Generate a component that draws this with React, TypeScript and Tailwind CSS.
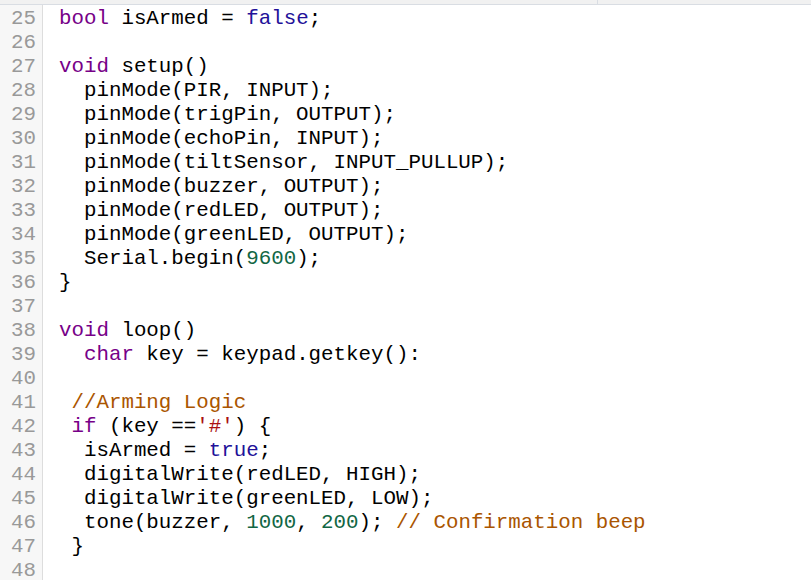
import React from "react";

type Tok = [string, string];
const K = "text-[#770088]";
const A = "text-[#221199]";
const N = "text-[#116644]";
const C = "text-[#aa5500]";
const S = "text-[#aa1111]";
const P = "text-[#000000]";

const lines: Tok[][] = [
  [[K, "bool"], [P, " isArmed = "], [A, "false"], [P, ";"]],
  [],
  [[K, "void"], [P, " setup()"]],
  [[P, "  pinMode(PIR, INPUT);"]],
  [[P, "  pinMode(trigPin, OUTPUT);"]],
  [[P, "  pinMode(echoPin, INPUT);"]],
  [[P, "  pinMode(tiltSensor, INPUT_PULLUP);"]],
  [[P, "  pinMode(buzzer, OUTPUT);"]],
  [[P, "  pinMode(redLED, OUTPUT);"]],
  [[P, "  pinMode(greenLED, OUTPUT);"]],
  [[P, "  Serial.begin("], [N, "9600"], [P, ");"]],
  [[P, "}"]],
  [],
  [[K, "void"], [P, " loop()"]],
  [[P, "  "], [K, "char"], [P, " key = keypad.getkey():"]],
  [],
  [[P, " "], [C, "//Arming Logic"]],
  [[P, " "], [K, "if"], [P, " (key =="], [S, "'#'"], [P, ") {"]],
  [[P, "  isArmed = "], [A, "true"], [P, ";"]],
  [[P, "  digitalWrite(redLED, HIGH);"]],
  [[P, "  digitalWrite(greenLED, LOW);"]],
  [[P, "  tone(buzzer, "], [N, "1000"], [P, ", "], [N, "200"], [P, "); "], [C, "// Confirmation beep"]],
  [[P, " }"]],
  [],
];

export default function App() {
  return (
    <div className="w-[811px] h-[580px] overflow-hidden bg-white flex flex-col" style={{ fontFamily: '"Liberation Mono", "Courier New", monospace' }}>
      <div className="h-[5px] shrink-0 flex bg-[#f1f1f1] border-b border-[#d9dde3]">
        <div className="w-[598px] border-r border-[#d9dde3]" />
        <div className="flex-1" />
      </div>
      <div className="flex flex-1">
        <div className="w-[43px] shrink-0 bg-[#f7f7f7] border-r border-[#dddddd] flex flex-col items-end pr-[6px] pt-[2px]">
          {lines.map((_, i) => (
            <div key={i} className="h-[24px] leading-[24px] text-[20.8px] text-[#999999]">
              {25 + i}
            </div>
          ))}
        </div>
        <div className="flex flex-col pl-[16px] pt-[2px]">
          {lines.map((l, i) => (
            <div key={i} className="h-[24px] leading-[24px] text-[20.8px] whitespace-pre">
              {l.map(([c, t], j) => (
                <span key={j} className={c}>{t}</span>
              ))}
            </div>
          ))}
        </div>
      </div>
    </div>
  );
}
